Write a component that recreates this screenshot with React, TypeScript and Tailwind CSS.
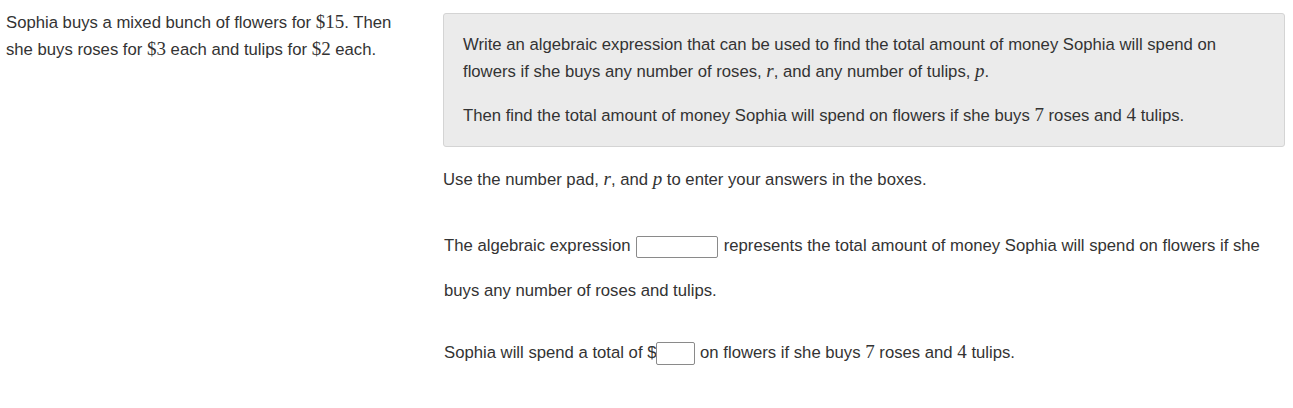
import React from 'react';

const M = ({ children }: { children: React.ReactNode }) => (
  <span className="font-['Liberation_Serif',serif] text-[19px] leading-none">{children}</span>
);

const V = ({ children }: { children: React.ReactNode }) => (
  <span className="font-['Liberation_Serif',serif] text-[19px] italic leading-none">{children}</span>
);

export default function App() {
  return (
    <div className="flex min-h-screen bg-white font-['Liberation_Sans',Arial,sans-serif] text-[16.7px] leading-[27px] text-[#333]">
      <div className="w-[443px] shrink-0 pl-[6px] pr-[30px] pt-[9px]">
        <p>
          Sophia buys a mixed bunch of flowers for <M>$15</M>. Then she buys roses for <M>$3</M> each and tulips for{' '}
          <M>$2</M> each.
        </p>
      </div>

      <div className="flex-1 pr-[8px] pt-[13px]">
        <div className="rounded-[3px] border border-[#d4d4d4] bg-[#ebebeb] px-[19px] pt-[17px] pb-[17px]">
          <p>
            Write an algebraic expression that can be used to find the total amount of money Sophia will spend on
            flowers if she buys any number of roses, <V>r</V>, and any number of tulips, <V>p</V>.
          </p>
          <p className="mt-[17px]">
            Then find the total amount of money Sophia will spend on flowers if she buys <M>7</M> roses and <M>4</M>{' '}
            tulips.
          </p>
        </div>

        <p className="mt-[19px]">
          Use the number pad, <V>r</V>, and <V>p</V> to enter your answers in the boxes.
        </p>

        <p className="mt-[30px] pl-px leading-[45px]">
          The algebraic expression{' '}
          <input
            type="text"
            className="mx-[1px] inline-block h-[22px] w-[82px] rounded-[2px] border border-[#8a8a8a] bg-white align-middle"
          />{' '}
          represents the total amount of money Sophia will spend on flowers if she buys any number of roses and tulips.
        </p>

        <p className="mt-[17px] pl-px leading-[45px]">
          Sophia will spend a total of $
          <input
            type="text"
            className="inline-block h-[23px] w-[39px] rounded-[2px] border border-[#8a8a8a] bg-white align-middle"
          />{' '}
          on flowers if she buys <M>7</M> roses and <M>4</M> tulips.
        </p>
      </div>
    </div>
  );
}
